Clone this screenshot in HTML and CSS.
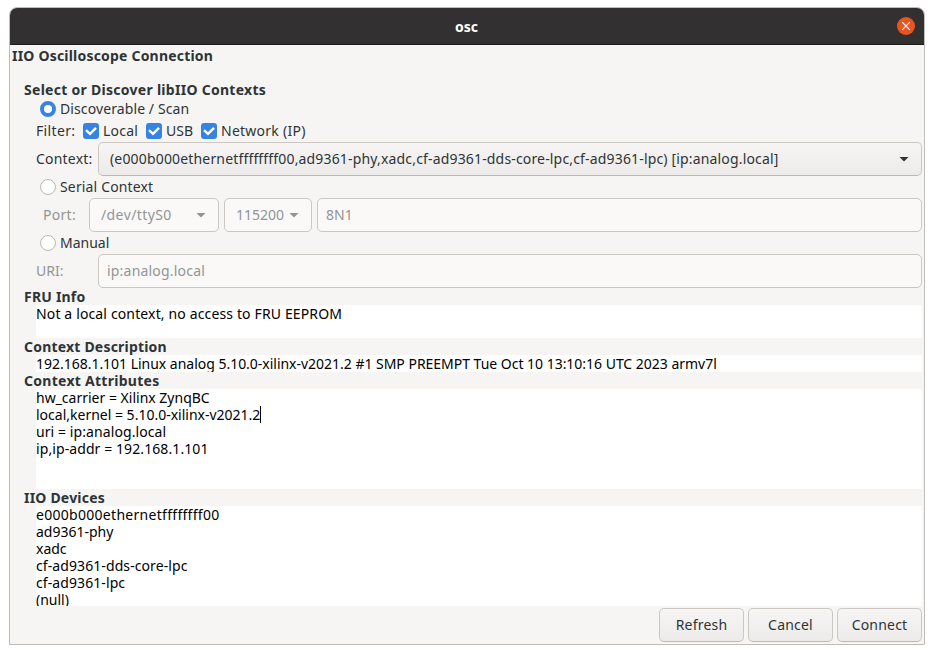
FILE: index.html
```html
<!DOCTYPE html>
<html lang="en">
<head>
<meta charset="utf-8">
<title>osc</title>
<link rel="stylesheet" href="styles.css">
</head>
<body>

<div class="window">
	<div class="titlebar">
		<span class="title">osc</span>
		<span class="close"><svg width="18" height="18" viewBox="0 0 18 18"><path d="M5.2 5.2l7.6 7.6M12.8 5.2l-7.6 7.6" stroke="#fff" stroke-width="1.2" fill="none"/></svg></span>
	</div>

	<div class="content">
		<h1>IIO Oscilloscope Connection</h1>

		<h2 class="wide">Select or Discover libIIO Contexts</h2>
		<div class="row radio-row"><span class="radio checked"></span><span class="t-disc">Discoverable / Scan</span></div>
		<div class="row">
			<span class="lbl-filter">Filter:</span>
			<span class="check"><svg width="16" height="16" viewBox="0 0 16 16"><path d="M3 7.2l4 3.6 6-6" stroke="#fff" stroke-width="2.4" fill="none"/></svg></span>
			<span class="chk-local">Local</span>
			<span class="check"><svg width="16" height="16" viewBox="0 0 16 16"><path d="M3 7.2l4 3.6 6-6" stroke="#fff" stroke-width="2.4" fill="none"/></svg></span>
			<span class="chk-usb">USB</span>
			<span class="check"><svg width="16" height="16" viewBox="0 0 16 16"><path d="M3 7.2l4 3.6 6-6" stroke="#fff" stroke-width="2.4" fill="none"/></svg></span>
			<span class="chk-net">Network (IP)</span>
		</div>
		<div class="row field-row">
			<span class="lbl-context">Context:</span>
			<div class="combo grow"><span class="t-context">(e000b000ethernetffffffff00,ad9361-phy,xadc,cf-ad9361-dds-core-lpc,cf-ad9361-lpc) [ip:analog.local]</span><i class="arrow"></i></div>
		</div>

		<div class="row radio-row"><span class="radio"></span><span class="t-serial">Serial Context</span></div>
		<div class="row field-row disabled">
			<span class="lbl-port">Port:</span>
			<div class="combo port"><span class="t-tty">/dev/ttyS0</span><i class="arrow"></i></div>
			<div class="combo baud"><span>115200</span><i class="arrow"></i></div>
			<div class="entry grow"><span>8N1</span></div>
		</div>

		<div class="row radio-row"><span class="radio"></span><span>Manual</span></div>
		<div class="row field-row disabled">
			<span class="lbl-uri">URI:</span>
			<div class="entry grow"><span class="t-uri">ip:analog.local</span></div>
		</div>

		<h2>FRU Info</h2>
		<div class="view fru"><p>Not a local context, no access to FRU EEPROM</p></div>

		<h2>Context Description</h2>
		<div class="view desc"><p>192.168.1.101 Linux analog 5.10.0-xilinx-v2021.2 #1 SMP PREEMPT Tue Oct 10 13:10:16 UTC 2023 armv7l</p></div>

		<h2 class="wide">Context Attributes</h2>
		<div class="view attrs">
			<p>hw_carrier = Xilinx ZynqBC</p>
			<p class="cursor">local,kernel = 5.10.0-xilinx-v2021.2</p>
			<p class="loose">uri = ip:analog.local</p>
			<p class="loose">ip,ip-addr = 192.168.1.101</p>
		</div>

		<h2>IIO Devices</h2>
		<div class="view devices">
			<p class="mac">e000b000ethernetffffffff00</p>
			<p>ad9361-phy</p>
			<p>xadc</p>
			<p class="loose">cf-ad9361-dds-core-lpc</p>
			<p class="loose">cf-ad9361-lpc</p>
			<p>(null)</p>
		</div>

		<div class="buttons">
			<button>Refresh</button>
			<button>Cancel</button>
			<button>Connect</button>
		</div>
	</div>
</div>

</body>
</html>
```
FILE: styles.css
```css
*
{
	box-sizing: border-box;
}
body
{
	margin: 0;
	padding: 7px 9px;
	background-color: #fff;
	font-family: "Noto Sans", "Open Sans", sans-serif;
	font-size: 14px;
	line-height: 17px;
	color: #2e3436;
	white-space: nowrap;
	overflow: hidden;
}
.window
{
	width: 916px;
	height: 638px;
	border: 1px solid #bebdbb;
	border-radius: 8px 8px 0 0;
	background-color: #f6f5f4;
	overflow: hidden;
}
.titlebar
{
	display: flex;
	align-items: center;
	justify-content: center;
	position: relative;
	height: 37px;
	background-color: #323030;
	border-bottom: 1px solid #1d1c1c;
	color: #fff;
	font-weight: bold;
}
.title
{
	padding-right: 1px;
}
.close
{
	position: absolute;
	top: 9px;
	right: 9px;
	width: 18px;
	height: 18px;
	border-radius: 50%;
	background-color: #e95420;
}
.close svg, .check svg
{
	display: block;
}
.content
{
	padding: 2px 2px 0 14px;
}
h1, h2, p
{
	margin: 0;
	font-size: 14px;
	height: 17px;
}
h1, h2
{
	letter-spacing: 0.2px;
}
h1
{
	margin: 0 0 17px -12px;
}
h2.wide
{
	letter-spacing: 0.28px;
}
.row
{
	display: flex;
	align-items: center;
	height: 22px;
	padding-left: 12px;
}
.row span
{
	padding-bottom: 1px;
}
.field-row
{
	height: 34px;
}
.radio-row
{
	padding-left: 16px;
}
.radio
{
	width: 16px;
	height: 16px;
	margin-right: 4px;
	border: 1px solid #bfb8b1;
	border-radius: 50%;
	background-color: #fff;
}
.radio.checked
{
	border: 4px solid #3584e4;
}
.check
{
	width: 16px;
	height: 16px;
	margin-right: 4px;
	border-radius: 3px;
	background-color: #3584e4;
}
.lbl-filter
{
	width: 47px;
	letter-spacing: 0.35px;
}
.chk-local
{
	width: 43px;
	letter-spacing: 0.2px;
}
.chk-usb
{
	width: 35px;
}
.chk-net
{
	letter-spacing: 0.25px;
}
.lbl-context, .lbl-uri
{
	width: 62px;
}
.lbl-context
{
	letter-spacing: 0.2px;
}
.lbl-port
{
	width: 53px;
	padding-left: 7px;
	letter-spacing: 0.3px;
}
.t-disc
{
	letter-spacing: 0.1px;
}
.t-serial
{
	letter-spacing: 0.15px;
}
.t-context
{
	letter-spacing: 0.165px;
}
.t-tty
{
	letter-spacing: 0.4px;
}
.t-uri
{
	letter-spacing: 0.2px;
}
.combo, .entry
{
	display: flex;
	align-items: center;
	justify-content: space-between;
	height: 34px;
	border: 1px solid #cdc7c2;
	border-radius: 5px;
}
.combo
{
	padding: 0 12px 0 11px;
	background: linear-gradient(#f6f5f4, #edebe9);
	border-bottom-color: #bfb8b1;
}
.entry
{
	padding: 0 8px;
}
.grow
{
	flex: 1;
}
.arrow
{
	width: 10px;
	height: 5px;
	background-color: #2e3436;
	clip-path: polygon(0 0, 100% 0, 50% 100%);
}
.port
{
	width: 130px;
	margin-right: 5px;
}
.baud
{
	width: 88px;
	margin-right: 5px;
}
.disabled
{
	color: #929595;
}
.disabled .combo, .disabled .entry
{
	background: #faf9f8;
	border-color: #cdc7c2;
}
.disabled .arrow
{
	background-color: #929595;
}
.view
{
	margin-left: 12px;
	background-color: #fff;
	color: #000;
	overflow: hidden;
}
.fru
{
	height: 33px;
	letter-spacing: 0.14px;
}
.desc
{
	height: 17px;
	letter-spacing: -0.02px;
}
.attrs, .devices
{
	height: 100px;
}
.loose
{
	letter-spacing: 0.09px;
}
.mac
{
	letter-spacing: 0.29px;
}
.cursor::after
{
	content: "";
	display: inline-block;
	width: 1px;
	height: 17px;
	background-color: #000;
	vertical-align: top;
}
.buttons
{
	display: flex;
	justify-content: flex-end;
	gap: 4px;
	padding-top: 2px;
}
button
{
	width: 85px;
	height: 34px;
	padding: 0 0 2px;
	font: inherit;
	letter-spacing: 0.2px;
	color: #2e3436;
	background: linear-gradient(#f6f5f4, #edebe9);
	border: 1px solid #cdc7c2;
	border-bottom-color: #bfb8b1;
	border-radius: 5px;
}
```
